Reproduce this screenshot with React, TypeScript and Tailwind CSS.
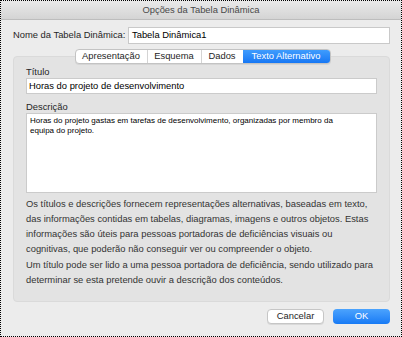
export default function App() {
  const tabs = ['Apresentação', 'Esquema', 'Dados', 'Texto Alternativo'];

  return (
    <div className="w-[402px] h-[337px] border border-dotted border-black bg-[#ececec] flex flex-col font-['Liberation_Sans',Arial,sans-serif] text-[#262626]">
      {/* title bar */}
      <div className="h-[19px] shrink-0 flex items-center justify-center bg-gradient-to-b from-[#e9e9e9] to-[#d4d4d4] border-b border-[#bdbdbd] text-[9.4px] text-[#4a4a4a]">
        Opções da Tabela Dinâmica
      </div>

      <div className="flex flex-col pl-[12px] pr-[11px]">
        <div className="flex items-center mt-[7px] h-[17px]">
          <span className="text-[9.4px] w-[115px] shrink-0">Nome da Tabela Dinâmica:</span>
          <div className="flex-1 h-[17px] bg-white border border-[#c9c9c9] flex items-center px-[3px] text-[9.4px] text-black">
            Tabela Dinâmica1
          </div>
        </div>

        {/* segmented tabs */}
        <div className="relative z-10 flex justify-center mt-[5px] pl-[2px]">
          <div className="flex h-[15px] rounded-[4px] border border-[#c3c3c3] bg-white overflow-hidden text-[9.4px] shadow-[0_1px_0_rgba(0,0,0,0.06)]">
            {tabs.map((t, i) => (
              <div
                key={t}
                className={
                  i === 3
                    ? 'w-[87px] flex items-center justify-center bg-gradient-to-b from-[#3f9cfd] to-[#1677f4] text-white'
                    : i === 0
                    ? 'w-[72px] flex items-center justify-center border-r border-[#d4d4d4]'
                    : i === 1
                    ? 'w-[54px] flex items-center justify-center border-r border-[#d4d4d4]'
                    : 'w-[41px] flex items-center justify-center'
                }
              >
                {t}
              </div>
            ))}
          </div>
        </div>

        {/* panel */}
        <div className="-mt-[8px] h-[246px] rounded-[4px] bg-[#e3e3e3] border border-[#dadada] px-[12px] pt-[8px] flex flex-col">
          <span className="text-[9.4px] leading-[13px]">Título</span>
          <div className="h-[16px] bg-white border border-[#cbcbcb] flex items-center px-[2px] text-[9.4px] text-black">
            Horas do projeto de desenvolvimento
          </div>
          <span className="mt-[6px] text-[9.4px] leading-[13px]">Descrição</span>
          <div className="h-[80px] bg-white border border-[#cbcbcb] pl-[3px] pr-[24px] pt-[2px] text-[8px] leading-[9.5px] text-black">
            Horas do projeto gastas em tarefas de desenvolvimento, organizadas por membro da equipa do projeto.
          </div>
          <p className="mt-[3px] text-[9.4px] leading-[15px] text-[#333]">
            Os títulos e descrições fornecem representações alternativas, baseadas em texto, das informações contidas em tabelas, diagramas, imagens e outros objetos. Estas informações são úteis para pessoas portadoras de deficiências visuais ou cognitivas, que poderão não conseguir ver ou compreender o objeto.
          </p>
          <p className="mt-[1px] text-[9.4px] leading-[15px] text-[#333]">
            Um título pode ser lido a uma pessoa portadora de deficiência, sendo utilizado para determinar se esta pretende ouvir a descrição dos conteúdos.
          </p>
        </div>

        {/* buttons */}
        <div className="flex justify-end gap-[9px] mt-[7px]">
          <button className="w-[57px] h-[15px] rounded-[4px] bg-white border border-[#c6c6c6] shadow-[0_1px_0_rgba(0,0,0,0.08)] text-[9.4px] text-[#262626] flex items-center justify-center">
            Cancelar
          </button>
          <button className="w-[57px] h-[15px] rounded-[4px] bg-gradient-to-b from-[#4ba3fd] to-[#167af5] text-white text-[9.4px] flex items-center justify-center">
            OK
          </button>
        </div>
      </div>
    </div>
  );
}
